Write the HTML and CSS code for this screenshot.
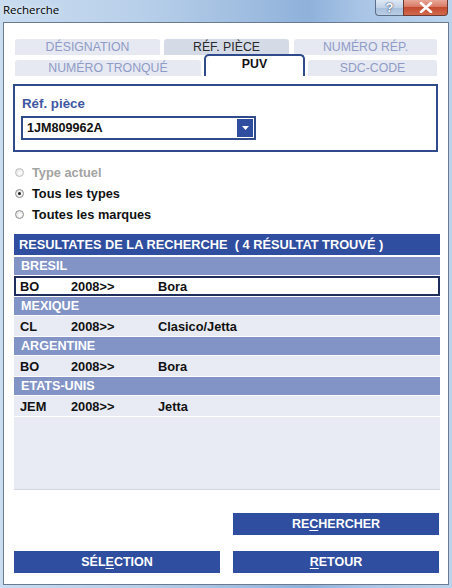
FILE: index.html
```html
<!DOCTYPE html>
<html>
<head>
<meta charset="utf-8">
<link rel="stylesheet" href="styles.css">
</head>
<body>
<div class="frame">
  <div class="titlebar">
    <span class="title">Recherche</span>
    <div class="caption-btns">
      <div class="cap help">?</div>
      <div class="cap close">
        <svg width="14" height="11" viewBox="0 0 14 11"><path d="M2 1 L12 10 M12 1 L2 10" stroke="#fff" stroke-width="2.6" stroke-linecap="round"/></svg>
      </div>
    </div>
  </div>
  <div class="client">
    <div class="tabs">
      <div class="tab-row">
        <div class="tab w145">DÉSIGNATION</div>
        <div class="tab tab-active-row w125">RÉF. PIÈCE</div>
        <div class="tab w143">NUMÉRO RÉP.</div>
      </div>
      <div class="tab-row row2">
        <div class="tab w186">NUMÉRO TRONQUÉ</div>
        <div class="tab tab-current w101">PUV</div>
        <div class="tab w129">SDC-CODE</div>
      </div>
    </div>

    <div class="panel">
      <div class="panel-label">Réf. pièce</div>
      <div class="combo">
        <span class="combo-value">1JM809962A</span>
        <span class="combo-btn">
          <svg width="7" height="4" viewBox="0 0 7 4"><path d="M0 0 H7 L3.5 4 Z" fill="#fff"/></svg>
        </span>
      </div>
    </div>

    <div class="radios">
      <div class="radio disabled"><span class="dot"></span>Type actuel</div>
      <div class="radio checked"><span class="dot"></span>Tous les types</div>
      <div class="radio"><span class="dot"></span>Toutes les marques</div>
    </div>

    <div class="results-head">RESULTATES DE LA RECHERCHE &nbsp;( 4 RÉSULTAT TROUVÉ )</div>
    <div class="list">
      <div class="group">BRESIL</div>
      <div class="row selected"><span>BO</span><span>2008&gt;&gt;</span><span>Bora</span></div>
      <div class="group">MEXIQUE</div>
      <div class="row"><span>CL</span><span>2008&gt;&gt;</span><span>Clasico/Jetta</span></div>
      <div class="group">ARGENTINE</div>
      <div class="row"><span>BO</span><span>2008&gt;&gt;</span><span>Bora</span></div>
      <div class="group">ETATS-UNIS</div>
      <div class="row"><span>JEM</span><span>2008&gt;&gt;</span><span>Jetta</span></div>
      <div class="filler"></div>
    </div>

    <div class="buttons">
      <div class="btn-row right">
        <div class="btn">RE<u>C</u>HERCHER</div>
      </div>
      <div class="btn-row">
        <div class="btn">SÉL<u>E</u>CTION</div>
        <div class="btn"><u>R</u>ETOUR</div>
      </div>
    </div>
  </div>
</div>
</body>
</html>
```
FILE: styles.css
```css
* { box-sizing: border-box; }
html, body {
  margin: 0;
  padding: 0;
  width: 452px;
  height: 588px;
  overflow: hidden;
}
body {
  font-family: "Liberation Sans", Arial, sans-serif;
  font-size: 12px;
  color: #111;
}
.frame {
  width: 452px;
  height: 588px;
  display: flex;
  flex-direction: column;
  padding: 0 3px 3px 3px;
  background: linear-gradient(90deg, #c9dcf0 0%, #b9d0ea 30%, #9fbde0 55%, #8fb1da 68%, #a9c5e6 80%, #bcd3ec 100%);
}
.titlebar {
  height: 22px;
  display: flex;
  align-items: flex-start;
  justify-content: space-between;
  flex-shrink: 0;
}
.title {
  font-family: "Open Sans", "Noto Sans", sans-serif;
  font-size: 11.5px;
  color: #000;
  padding-top: 2px;
  text-shadow: 0 0 6px rgba(255,255,255,0.9);
}
.caption-btns {
  display: flex;
  margin-right: 1px;
}
.cap {
  height: 16px;
  display: flex;
  align-items: center;
  justify-content: center;
  border: 1px solid #5d6f88;
  border-top: none;
}
.help {
  width: 28px;
  border-right: none;
  border-radius: 0 0 0 4px;
  background: linear-gradient(180deg, #dde8f4 0%, #c2d3e8 50%, #a9bfdb 51%, #b9cde4 100%);
  color: #fff;
  font-family: "Liberation Sans", sans-serif;
  font-weight: bold;
  font-size: 13px;
  text-shadow: 0 0 2px #3a4e6e, 0 0 1px #3a4e6e;
}
.close {
  width: 45px;
  border-radius: 0 0 4px 0;
  background: linear-gradient(180deg, #e8a798 0%, #d87a65 45%, #c44a2f 50%, #d1694d 100%);
  border-color: #6b3a32;
}
.client {
  flex: 1;
  background: #fff;
  border: 1px solid #6a7a90;
  display: flex;
  flex-direction: column;
  padding: 16px 8px 0 10px;
}

/* tabs */
.tabs {
  display: flex;
  flex-direction: column;
  padding-left: 1px;
}
.tab-row {
  display: flex;
  gap: 4px;
  height: 16px;
  align-items: flex-end;
}
.tab-row.row2 {
  margin-top: 5px;
  gap: 3px;
}
.tab {
  height: 16px;
  background: #e6e9f2;
  border-radius: 3px 3px 0 0;
  color: #8f9bc6;
  display: flex;
  align-items: center;
  justify-content: center;
  font-size: 12.3px;
  line-height: 16px;
}
.w145 { width: 145px; }
.w125 { width: 125px; margin-right: 1px; }
.w143 { width: 143px; }
.w186 { width: 186px; }
.w101 { width: 101px; }
.w129 { width: 129px; }
.tab-active-row {
  background: #d5dae7;
  color: #2a2a2a;
}
.tab-current {
  height: 22px;
  margin-top: -6px;
  background: #fff;
  border: 2px solid #2f4b8c;
  border-bottom: none;
  border-radius: 5px 5px 0 0;
  color: #111;
  font-weight: bold;
  padding-bottom: 4px;
}

/* panel */
.panel {
  margin-top: 8px;
  margin-left: -1px;
  width: 425px;
  height: 68px;
  border: 2px solid #2f4b8c;
  padding: 11px 0 0 6px;
}
.panel-label {
  color: #3f57a3;
  font-weight: bold;
  font-size: 13.3px;
  line-height: 14px;
  padding-left: 1px;
}
.combo {
  margin-top: 5px;
  width: 235px;
  height: 24px;
  border: 2px solid #2f4b8c;
  display: flex;
  align-items: center;
  justify-content: space-between;
  padding: 0 1px 0 4px;
}
.combo-value {
  font-weight: bold;
  font-size: 12.6px;
}
.combo-btn {
  width: 16px;
  height: 18px;
  background: #2f4ea0;
  display: flex;
  align-items: center;
  justify-content: center;
}

/* radios */
.radios {
  margin-top: 10px;
  display: flex;
  flex-direction: column;
}
.radio {
  height: 21px;
  display: flex;
  align-items: center;
  font-weight: bold;
  font-size: 12.8px;
  color: #111;
  padding-left: 1px;
}
.radio .dot {
  width: 9px;
  height: 9px;
  border-radius: 50%;
  border: 1px solid #8c8c8c;
  background: radial-gradient(circle at 60% 60%, #fff 0%, #eaeaea 60%, #cfcfcf 100%);
  margin-right: 8px;
  position: relative;
}
.radio.checked .dot::after {
  content: "";
  position: absolute;
  left: 2px;
  top: 2px;
  width: 3px;
  height: 3px;
  border-radius: 50%;
  background: #1a1a1a;
}
.radio.disabled {
  color: #a3a3a3;
}
.radio.disabled .dot {
  border-color: #bdbdbd;
}

/* results */
.results-head {
  margin-top: 9px;
  height: 21px;
  background: #2f4e9f;
  color: #fff;
  font-weight: bold;
  font-size: 12.8px;
  line-height: 21px;
  padding-left: 5px;
  white-space: nowrap;
}
.list {
  margin-top: 2px;
  height: 233px;
  display: flex;
  flex-direction: column;
  gap: 1px;
  background: #fff;
  border-bottom: 1px solid #d3d7df;
}
.group {
  height: 18px;
  flex-shrink: 0;
  background: #8294c6;
  color: #fff;
  font-weight: bold;
  font-size: 12.6px;
  line-height: 18px;
  padding-left: 7px;
}
.row {
  height: 20px;
  flex-shrink: 0;
  background: #e8ebf3;
  display: grid;
  grid-template-columns: 51px 87px 1fr;
  align-items: center;
  padding-left: 6px;
  font-weight: bold;
  font-size: 12.8px;
}
.row.selected {
  background: #fff;
  border: 2px solid #1f2d5c;
  padding-left: 4px;
}
.filler {
  flex: 1;
  background: #e8ebf3;
}

/* buttons */
.buttons {
  margin-top: 23px;
  display: flex;
  flex-direction: column;
  gap: 16px;
}
.btn-row {
  display: flex;
  gap: 13px;
}
.btn-row.right {
  justify-content: flex-end;
  padding-right: 1px;
}
.btn {
  width: 206px;
  height: 22px;
  background: #2f4e9f;
  color: #fff;
  font-weight: bold;
  font-size: 12.5px;
  display: flex;
  align-items: center;
  justify-content: center;
}
.btn u {
  text-decoration-thickness: 1px;
  text-underline-offset: 2px;
}
```
